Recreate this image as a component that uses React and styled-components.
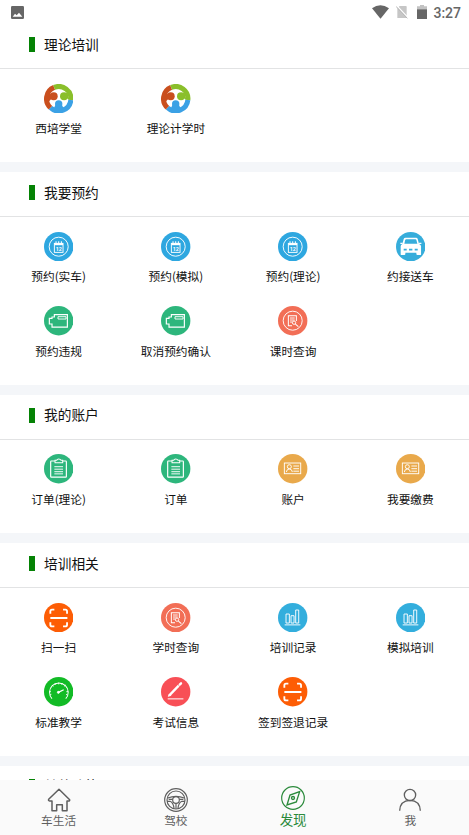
import React from "react";
import styled, { createGlobalStyle } from "styled-components";

const sections = [
  {
    title: "理论培训",
    items: [
      { icon: "logo", label: "西培学堂" },
      { icon: "logo", label: "理论计学时" },
    ],
  },
  {
    title: "我要预约",
    items: [
      { icon: "calendar", label: "预约(实车)" },
      { icon: "calendar", label: "预约(模拟)" },
      { icon: "calendar", label: "预约(理论)" },
      { icon: "car", label: "约接送车" },
      { icon: "camera", label: "预约违规" },
      { icon: "camera", label: "取消预约确认" },
      { icon: "query", label: "课时查询" },
    ],
  },
  {
    title: "我的账户",
    items: [
      { icon: "clipboard", label: "订单(理论)" },
      { icon: "clipboard", label: "订单" },
      { icon: "card", label: "账户" },
      { icon: "card", label: "我要缴费" },
    ],
  },
  {
    title: "培训相关",
    items: [
      { icon: "scan", label: "扫一扫" },
      { icon: "query", label: "学时查询" },
      { icon: "chart", label: "培训记录" },
      { icon: "chart", label: "模拟培训" },
      { icon: "gauge", label: "标准教学" },
      { icon: "pencil", label: "考试信息" },
      { icon: "scan", label: "签到签退记录" },
    ],
  },
  { title: "其他功能", items: [] },
];

const tabs = [
  { icon: "home", label: "车生活" },
  { icon: "wheel", label: "驾校" },
  { icon: "compass", label: "发现", active: true },
  { icon: "user", label: "我" },
];

const colors = {
  calendar: "#2ea7e0",
  car: "#36addb",
  camera: "#2db67c",
  query: "#f26e56",
  clipboard: "#2db67c",
  card: "#e9a94b",
  scan: "#fd5d05",
  chart: "#33aedd",
  gauge: "#12bb26",
  pencil: "#f84f56",
};

const Day = styled.text`
  fill: #fff;
  stroke: none;
  font: 700 16px Roboto, sans-serif;
`;

const glyphs = {
  calendar: (
    <>
      <circle cx="44" cy="44" r="28.5" />
      <rect x="31" y="34" width="26" height="27" />
      <path d="M31 36.5H57" strokeWidth="6" />
      <path d="M36 28V35M44 28V35M52 28V35" strokeWidth="3" />
      <Day x="44" y="56.5" textAnchor="middle">
        12
      </Day>
    </>
  ),
  car: (
    <>
      <path
        fill="#fff"
        stroke="none"
        fillRule="evenodd"
        d="M29 17H60Q64 17 65 21L69 36Q75 38 75 43V67Q75 69 72 69H64Q61 69 61 66V62H28V66Q28 69 25 69H17Q14 69 14 67V43Q14 38 19 36L23 21Q24 17 29 17ZM31 22Q28 22 27.5 24L25 35H64L61 24Q60.5 22 58 22Z"
      />
      <path d="M13 34H20M69 34H76" strokeWidth="4" />
      <path d="M23 53H32M39 53H49M56 53H65" stroke="#36addb" strokeWidth="5" />
    </>
  ),
  camera: (
    <>
      <path d="M31 26H70V63H24V54H16V37H24V33H31Z" strokeWidth="3.5" />
      <path d="M42 32H66V39H42Z" />
    </>
  ),
  query: (
    <>
      <circle cx="44" cy="44" r="28.5" />
      <path d="M42 59H31V29H55V45" strokeWidth="3" />
      <path d="M36 36H50M36 42H50M36 48H43" />
      <circle cx="48" cy="50" r="5" />
      <path d="M52 54L61 62" strokeWidth="3" />
    </>
  ),
  clipboard: (
    <>
      <path
        d="M33 21H22Q20 21 20 23V67Q20 69 22 69H65Q67 69 67 67V23Q67 21 65 21H56"
        strokeWidth="3.5"
      />
      <path d="M33 26V19H38Q39 15 44 15Q49 15 51 19H56V26Z" strokeWidth="3" />
      <path d="M31 38H57M31 45.5H57M31 53H57M31 59.5H57" />
    </>
  ),
  card: (
    <>
      <rect x="19" y="27" width="49" height="32" />
      <circle cx="34" cy="38" r="6" />
      <path d="M25 54Q26 45 34 45Q42 45 43 54M46 36H63M46 44H63M46 51.5H63" />
    </>
  ),
  scan: (
    <path
      d="M19 32V25Q19 20 24 20H31M57 20H64Q69 20 69 25V32M69 58V65Q69 70 64 70H57M31 70H24Q19 70 19 65V58M19 45H70"
      strokeWidth="5.5"
    />
  ),
  chart: (
    <path d="M24 33H34V60H24ZM39 38H48V60H39ZM53 21H62V60H53ZM20 65.5H67" />
  ),
  gauge: (
    <>
      <path d="M24 65A28 28 0 1 1 65 65" strokeWidth="3" />
      <path d="M16 44H21M24 24L28 28M44 17V22M64 24L60 28M72 44H67M18 54L22 52M70 54L66 52M33 19L35 23M55 19L53 23" />
      <circle cx="43" cy="46" r="3" fill="#fff" />
      <path d="M43 46L59 38" strokeWidth="3.5" />
    </>
  ),
  pencil: (
    <>
      <path d="M25 55L53 26" strokeWidth="7" />
      <path d="M56 23L60 19" strokeWidth="7" strokeLinecap="round" />
      <path d="M22 58L29 55L25 51Z" fill="#fff" />
      <path d="M20 65.5H67" strokeWidth="3" />
    </>
  ),
};

const tabGlyphs = {
  home: (
    <path
      strokeLinejoin="round"
      d="M36 4L68 35Q69 39 64 39H60V68H46V50H29V68H15V39H8Q3 38 5 34Z"
      strokeWidth="4.5"
    />
  ),
  wheel: (
    <>
      <circle cx="36" cy="36" r="34" />
      <circle cx="36" cy="36" r="27" />
      <circle cx="36" cy="36" r="10" />
      <path d="M11 30Q36 20 61 30M9 40H18Q28 44 30 61M63 40H54Q44 44 42 61M14 34H26M46 34H58M36 46V62" />
    </>
  ),
  compass: (
    <>
      <circle cx="36" cy="36" r="34" />
      <path d="M56 17L46 48L18 57L27 27Z" strokeWidth="4" />
      <circle cx="36" cy="36" r="4.5" strokeWidth="4" />
    </>
  ),
  user: (
    <>
      <circle cx="36" cy="21" r="17" strokeWidth="4" />
      <path d="M5 68Q6 38 36 37Q66 38 67 68" strokeWidth="4" />
    </>
  ),
};

function Logo() {
  return (
    <Round viewBox="0 0 88 88">
      <g fill="none" strokeWidth="15">
        <path d="M19.6 71.1A36.5 36.5 0 0 1 30.3 10.2" stroke="#c94f1e" />
        <path d="M30.3 10.2A36.5 36.5 0 0 1 80.4 48" stroke="#8abf2b" />
        <path d="M80.4 48A36.5 36.5 0 0 1 19.6 71.1" stroke="#3ba1e5" />
      </g>
      <path d="M12 27L30 36L14 53Z" fill="#c94f1e" />
      <circle cx="29" cy="37" r="12" fill="#c94f1e" />
      <path d="M70 24L60 36L76 48Z" fill="#8abf2b" />
      <circle cx="60" cy="37" r="12" fill="#8abf2b" />
      <path d="M36 60H52L60 75H28Z" fill="#3ba1e5" />
      <circle cx="44" cy="60" r="11" fill="#3ba1e5" />
    </Round>
  );
}

function ItemIcon({ name }) {
  if (name === "logo") {
    return <Logo />;
  }
  return (
    <Round viewBox="0 0 88 88">
      <circle cx="44" cy="44" r="44" fill={colors[name]} />
      <g fill="none" stroke="#fff" strokeWidth="2.8">
        {glyphs[name]}
      </g>
    </Round>
  );
}

function Status() {
  return (
    <StatusBar>
      <svg width="13" height="13" viewBox="0 0 39 39">
        <rect width="39" height="39" rx="4" fill="#666" />
        <path d="M5 32L12 23L17 28L24 20L34 32Z" fill="#fff" />
      </svg>
      <StatusRight>
        <svg width="17" height="14" viewBox="0 0 51 42">
          <path d="M0 10Q25 -9 51 10L25.5 41Z" fill="#666" />
        </svg>
        <svg width="12" height="14" viewBox="0 0 36 42">
          <path d="M11 3H30Q32 3 32 5V39H4V10Z" fill="#c6c6c6" />
          <path d="M3 3L36 38" stroke="#fff" strokeWidth="4" />
          <path d="M0 4L34 40" stroke="#b5b5b5" strokeWidth="3" />
        </svg>
        <svg width="10" height="14" viewBox="0 0 30 42">
          <path d="M9 0H21V4H30V14H0V4H9Z" fill="#c2c2c2" />
          <path d="M0 13H30V42H0Z" fill="#666" />
        </svg>
        <Clock>3:27</Clock>
      </StatusRight>
    </StatusBar>
  );
}

export default function App() {
  return (
    <Screen>
      <GlobalStyle />
      <Status />
      <Content>
        {sections.map((section) => (
          <Section key={section.title}>
            <SectionHeader>
              <Marker />
              <Title>{section.title}</Title>
            </SectionHeader>
            <Grid>
              {section.items.map((item) => (
                <Item key={item.label}>
                  <ItemIcon name={item.icon} />
                  <Label>{item.label}</Label>
                </Item>
              ))}
            </Grid>
          </Section>
        ))}
      </Content>
      <TabBar>
        {tabs.map((tab) => (
          <Tab key={tab.label} $active={tab.active}>
            <TabIcon viewBox="0 0 72 72">{tabGlyphs[tab.icon]}</TabIcon>
            <TabLabel>{tab.label}</TabLabel>
          </Tab>
        ))}
      </TabBar>
    </Screen>
  );
}

const GlobalStyle = createGlobalStyle`
  * {
    box-sizing: border-box;
  }

  body {
    margin: 0;
    background: #fff;
    font-family: "Noto Sans CJK SC", sans-serif;
  }
`;

const Screen = styled.div`
  display: flex;
  flex-direction: column;
  width: 100%;
  height: 835px;
  overflow: hidden;
`;

const StatusBar = styled.div`
  display: flex;
  flex: none;
  justify-content: space-between;
  align-items: center;
  height: 24px;
  padding: 0 8px 0 11px;
`;

const StatusRight = styled.div`
  display: flex;
  align-items: center;

  svg + svg {
    margin-left: 7px;
  }

  svg:nth-child(3) {
    margin-left: 9px;
  }
`;

const Clock = styled.span`
  margin-left: 6px;
  padding-top: 1px;
  color: #666;
  font: 500 14px/20px Roboto, sans-serif;
`;

const Content = styled.main`
  flex: 1;
  min-height: 0;
  overflow: hidden;
  background: #f4f6f9;
`;

const Section = styled.section`
  margin-bottom: 9.8px;
  padding-bottom: 19.1px;
  background: #fff;
`;

const SectionHeader = styled.div`
  display: flex;
  align-items: center;
  height: 45px;
  padding: 0 29px;
  padding-bottom: 3px;
  border-bottom: 1px solid #e2e3e4;
`;

const Marker = styled.div`
  width: 6px;
  height: 14.6px;
  background: #058205;
`;

const Title = styled.h2`
  margin: 0 0 2px 9px;
  color: #111;
  font-size: 13.7px;
  font-weight: 400;
  line-height: 20px;
`;

const Grid = styled.div`
  display: grid;
  grid-template-columns: repeat(4, 1fr);
  grid-auto-rows: 74.4px;
`;

const Item = styled.div`
  display: flex;
  flex-direction: column;
  align-items: center;
  padding-top: 14.5px;
`;

const Round = styled.svg`
  width: 29.4px;
  height: 29.4px;
`;

const Label = styled.span`
  margin-top: 6.2px;
  color: #111;
  font-size: 11.7px;
  line-height: 17px;
  white-space: nowrap;
`;

const TabBar = styled.nav`
  display: grid;
  flex: none;
  grid-template-columns: repeat(4, 1fr);
  height: 55px;
  background: #fafafa;
`;

const Tab = styled.div`
  display: flex;
  flex-direction: column;
  align-items: center;
  padding-top: ${({ $active }) => ($active ? "6px" : "8px")};
  color: ${({ $active }) => ($active ? "#2b8a3b" : "#5f5f5f")};
  font-size: ${({ $active }) => ($active ? "13.5px" : "11.7px")};
  line-height: ${({ $active }) => ($active ? "20px" : "18px")};
`;

const TabIcon = styled.svg`
  width: 24px;
  height: 24px;
  fill: none;
  stroke: currentColor;
  stroke-width: 3.5;
`;

const TabLabel = styled.span`
  margin-top: -1px;
`;
